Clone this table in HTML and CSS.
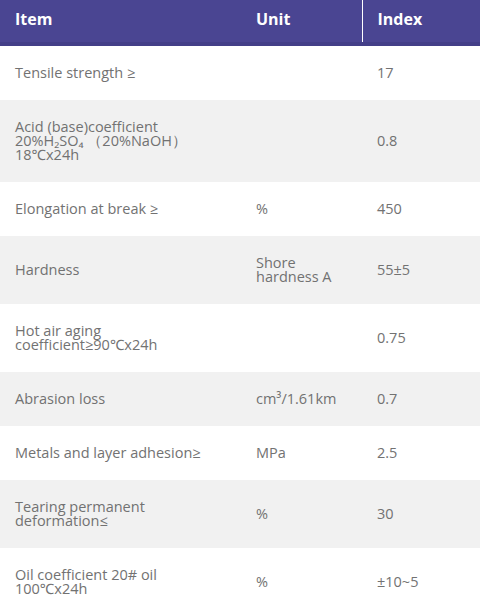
FILE: index.html
```html
<!DOCTYPE html>
<html>
<head>
<meta charset="utf-8">
<link rel="stylesheet" href="styles.css">
</head>
<body>
<table class="spec">
  <colgroup>
    <col class="c-item">
    <col class="c-unit">
    <col class="c-index">
  </colgroup>
  <thead>
    <tr><th>Item</th><th>Unit</th><th class="last">Index</th></tr>
  </thead>
  <tbody>
    <tr><td>Tensile strength ≥</td><td></td><td>17</td></tr>
    <tr><td>Acid (base)coefficient<br>20%H₂SO₄ （20%NaOH）<br>18℃x24h</td><td></td><td>0.8</td></tr>
    <tr><td>Elongation at break ≥</td><td>%</td><td>450</td></tr>
    <tr><td>Hardness</td><td>Shore<br>hardness A</td><td>55±5</td></tr>
    <tr><td>Hot air aging<br>coefficient≥90℃x24h</td><td></td><td>0.75</td></tr>
    <tr><td>Abrasion loss</td><td>cm³/1.61km</td><td>0.7</td></tr>
    <tr><td>Metals and layer adhesion≥</td><td>MPa</td><td>2.5</td></tr>
    <tr><td>Tearing permanent<br>deformation≤</td><td>%</td><td>30</td></tr>
    <tr><td>Oil coefficient 20# oil<br>100℃x24h</td><td>%</td><td>±10~5</td></tr>
  </tbody>
</table>
</body>
</html>
```
FILE: styles.css
```css
html, body {
  margin: 0;
  padding: 0;
  background: #ffffff;
}
.spec {
  width: 480px;
  border-collapse: collapse;
  table-layout: fixed;
  font-family: "Open Sans", "Noto Sans", sans-serif;
}
.c-item { width: 241px; }
.c-unit { width: 121px; }
.c-index { width: 118px; }
.spec th {
  background: #4a4592;
  color: #ffffff;
  font-size: 16px;
  line-height: 20px;
  font-weight: 700;
  text-align: left;
  padding: 9px 15px 13px;
  border-bottom: 4px solid #433f88;
}
.spec th.last {
  border-left: 1px solid #ffffff;
}
.spec td {
  color: #727272;
  font-size: 14.5px;
  line-height: 14px;
  padding: 20px 15px;
  vertical-align: middle;
}
.spec tbody tr:nth-child(even) td {
  background: #f1f1f1;
}
```
